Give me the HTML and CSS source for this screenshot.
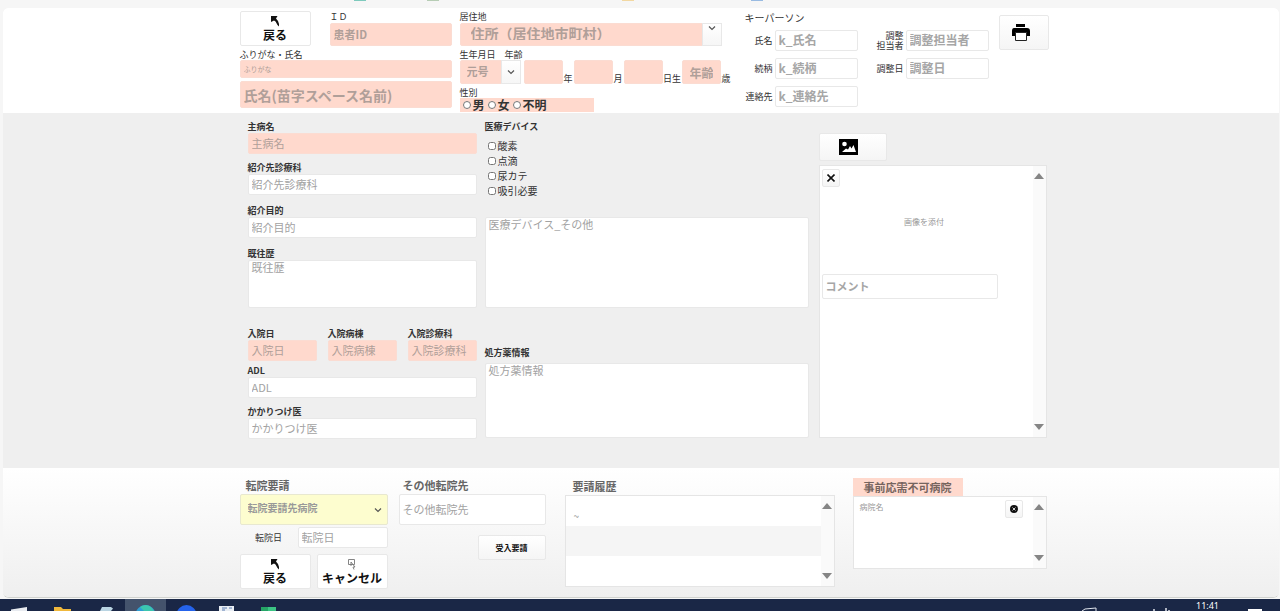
FILE: index.html
```html
<!DOCTYPE html>
<html lang="ja">
<head>
<meta charset="utf-8">
<title>転院調整</title>
<link rel="stylesheet" href="styles.css">
</head>
<body>
<svg class="symbols" aria-hidden="true">
  <symbol id="chevron" viewBox="0 0 8 8"><path d="M1 2.5 4 5.5 7 2.5" fill="none" stroke="#555" stroke-width="1.2"/></symbol>
  <symbol id="back" viewBox="0 0 8 11"><path d="M0 0h6.500L5 2.500 7 5l1 3v2.500L6.500 9 4.500 5.500 3 4.500 0 6z" fill="#111"/></symbol>
  <symbol id="up" viewBox="0 0 10 6"><path d="M0 6 5 0 10 6z" fill="#858585"/></symbol>
  <symbol id="down" viewBox="0 0 10 6"><path d="M0 0 5 6 10 0z" fill="#858585"/></symbol>
</svg>

<div class="tabstrip" aria-hidden="true"><i class="tab tab-teal"></i><i class="tab tab-mix"></i><i class="tab tab-amber"></i><i class="tab tab-blue"></i></div>

<div class="window">
  <header class="head band">
    <div class="inner head-grid">
      <section>
        <div class="id-row">
          <button class="btn big flat"><svg class="ic-back"><use href="#back"/></svg>戻る</button>
          <div class="id-field">
            <label class="lbl" for="pid">ＩＤ</label>
            <input class="in pink strong h23" id="pid" placeholder="患者ID">
          </div>
        </div>
        <label class="lbl name-lbl" for="name">ふりがな・氏名</label>
        <input class="in pink kana" aria-label="ふりがな" placeholder="ふりがな">
        <input class="in pink strong fullname" id="name" placeholder="氏名(苗字スペース名前)">
      </section>

      <section>
        <label class="lbl" for="addr">居住地</label>
        <div class="pick addr">
          <select class="pink" id="addr"><option>住所（居住地市町村）</option></select>
          <span class="drop"><svg><use href="#chevron"/></svg></span>
        </div>
        <div class="lbl birth-lbl"><label for="era">生年月日</label><label for="age">年齢</label></div>
        <div class="birth">
          <div class="pick era">
            <select class="pink" id="era"><option>元号</option></select>
            <span class="drop"><svg><use href="#chevron"/></svg></span>
          </div>
          <input class="in pink num" id="by"><label class="unit" for="by">年</label>
          <input class="in pink num" id="bm"><label class="unit" for="bm">月</label>
          <input class="in pink num" id="bd"><label class="unit wide" for="bd">日生</label>
          <input class="in pink num strong" id="age" placeholder="年齢"><label class="unit" for="age">歳</label>
        </div>
        <div class="lbl sex-lbl">性別</div>
        <div class="sex" role="radiogroup" aria-label="性別">
          <label><input type="radio" name="sex">男</label>
          <label><input type="radio" name="sex">女</label>
          <label><input type="radio" name="sex">不明</label>
        </div>
      </section>

      <section>
        <h2 class="key-title">キーパーソン</h2>
        <div class="pairs">
          <label for="kn">氏名</label><input class="in strong" id="kn" placeholder="k_氏名">
          <label for="kr">続柄</label><input class="in strong" id="kr" placeholder="k_続柄">
          <label for="kt">連絡先</label><input class="in strong" id="kt" placeholder="k_連絡先">
        </div>
      </section>

      <section class="coord">
        <div class="pairs">
          <label for="cn">調整<br>担当者</label><input class="in strong" id="cn" placeholder="調整担当者">
          <label for="cd">調整日</label><input class="in strong" id="cd" placeholder="調整日">
        </div>
      </section>

      <button class="btn print" aria-label="印刷">
        <svg viewBox="0 0 20 19"><path d="M5 1h9v3H5zM3 5h13q3 0 3 3v5h-4V9H5v4H1V8q0-3 2-3z" fill="#000"/><path d="M4.500 9.500h11v8h-11z" fill="#fff" stroke="#222"/></svg>
      </button>
    </div>
  </header>

  <main class="main band">
    <div class="inner main-grid">
      <section>
        <div class="field"><label for="f1">主病名</label><input class="in pink" id="f1" placeholder="主病名"></div>
        <div class="field g8"><label for="f2">紹介先診療科</label><input class="in" id="f2" placeholder="紹介先診療科"></div>
        <div class="field g10"><label for="f3">紹介目的</label><input class="in" id="f3" placeholder="紹介目的"></div>
        <div class="field g10"><label for="f4">既往歴</label><textarea class="in area-s" id="f4" placeholder="既往歴"></textarea></div>
        <div class="trio">
          <div class="field"><label for="f5">入院日</label><input class="in pink" id="f5" placeholder="入院日"></div>
          <div class="field"><label for="f6">入院病棟</label><input class="in pink" id="f6" placeholder="入院病棟"></div>
          <div class="field"><label for="f7">入院診療科</label><input class="in pink" id="f7" placeholder="入院診療科"></div>
        </div>
        <div class="field g4"><label for="f8">ADL</label><input class="in" id="f8" placeholder="ADL"></div>
        <div class="field g8"><label for="f9">かかりつけ医</label><input class="in" id="f9" placeholder="かかりつけ医"></div>
      </section>

      <section class="mid">
        <div class="field"><label for="dev">医療デバイス</label></div>
        <div class="checks">
          <label><input type="checkbox">酸素</label>
          <label><input type="checkbox">点滴</label>
          <label><input type="checkbox">尿カテ</label>
          <label><input type="checkbox">吸引必要</label>
        </div>
        <textarea class="in area-l" id="dev" placeholder="医療デバイス_その他"></textarea>
        <div class="field drug"><label for="drug">処方薬情報</label><textarea class="in area-m" id="drug" placeholder="処方薬情報"></textarea></div>
      </section>

      <section class="right">
        <button class="btn photo" aria-label="画像">
          <svg viewBox="0 0 19 16"><path d="M0 0h19v16H0z" fill="#000"/><circle cx="5.500" cy="5" r="2.300" fill="#fff"/><path d="M3 13 7 9.500 9 10.500 11 7l1.500 2.500L14.500 6 17 13z" fill="#fff"/></svg>
        </button>
        <div class="panel">
          <div class="attach">
            <button class="btn mini" aria-label="削除"><svg viewBox="0 0 8 8"><path d="M.5.5 7.500 7.500M7.500.5.5 7.500" stroke="#111" stroke-width="1.600"/></svg></button>
            <p class="attach-text">画像を添付</p>
            <input class="in strong comment" aria-label="コメント" placeholder="コメント">
          </div>
          <div class="bar"><svg><use href="#up"/></svg><svg><use href="#down"/></svg></div>
        </div>
      </section>
    </div>
  </main>

  <footer class="foot band">
    <div class="inner foot-grid">
      <section>
        <label class="ttl" for="req">転院要請</label>
        <div class="pick req">
          <select id="req"><option>転院要請先病院</option></select>
          <span class="drop"><svg><use href="#chevron"/></svg></span>
        </div>
        <div class="date-row"><label for="td">転院日</label><input class="in" id="td" placeholder="転院日"></div>
        <div class="actions">
          <button class="btn big flat"><svg class="ic-back"><use href="#back"/></svg>戻る</button>
          <button class="btn big flat"><svg class="ic-back" viewBox="0 0 8 11"><path d="M.5.5h6v5h-6zM3 3l4 5-2 0 1 2.500M3 3v4" fill="none" stroke="#777" stroke-width=".9"/></svg>キャンセル</button>
        </div>
      </section>

      <section class="other">
        <label class="ttl" for="oth">その他転院先</label>
        <input class="in h31" id="oth" placeholder="その他転院先">
        <button class="btn accept">受入要請</button>
      </section>

      <section class="hist">
        <h2 class="ttl">要請履歴</h2>
        <div class="panel">
          <div class="rows"><p>~</p><p></p><p></p></div>
          <div class="bar"><svg><use href="#up"/></svg><svg><use href="#down"/></svg></div>
        </div>
      </section>

      <section>
        <h2 class="ng-title">事前応需不可病院</h2>
        <div class="panel ng">
          <div class="ng-row"><span>病院名</span>
            <button class="btn mini" aria-label="削除"><svg viewBox="0 0 8 8"><circle cx="4" cy="4" r="4" fill="#111"/><path d="M2.500 2.500 5.500 5.500M5.500 2.500 2.500 5.500" stroke="#fff" stroke-width=".8"/></svg></button>
          </div>
          <div class="bar"><svg><use href="#up"/></svg><svg><use href="#down"/></svg></div>
        </div>
      </section>
    </div>
  </footer>
</div>

<div class="taskbar">
  <div class="apps">
    <span><svg viewBox="0 0 41 12"><path d="M9 12v-1.500L25 8v4z" fill="#e8ebf0"/></svg></span>
    <span><svg viewBox="0 0 41 12"><path d="M11 12V8h7l2 2h8v2z" fill="#f0b83c"/></svg></span>
    <span><svg viewBox="0 0 41 12"><path d="M16 12 18 8h9l2 1.500-2 2.500z" fill="#b9d4e2"/></svg></span>
    <span class="active"><svg viewBox="0 0 41 12"><circle cx="20.500" cy="16" r="10" fill="#2f9fd4"/><path d="M15 8q6-4 11 0l3 4H19z" fill="#3cc6ae"/></svg></span>
    <span><svg viewBox="0 0 41 12"><circle cx="20.500" cy="16" r="10" fill="#2563eb"/></svg></span>
    <span><svg viewBox="0 0 41 12"><path d="M12 7h15v5H12z" fill="#e9eef4"/><path d="M15 9h5M15 11h3M22 9h3" stroke="#5a7bb0"/></svg></span>
    <span><svg viewBox="0 0 41 12"><path d="M13 8h15v4H13z" fill="#25a566"/><path d="M20 8h8v4h-8z" fill="#3cc484"/></svg></span>
  </div>
  <div class="tray">
    <svg class="tray-ic" viewBox="0 0 90 12"><path d="M1 12 4 10l11-1v3" fill="none" stroke="#dfe4ec"/><path d="M73 12v-2M85 12V9M88 12v-1" stroke="#dfe4ec" stroke-width="1.500"/></svg>
    <time>11:41</time>
    <svg class="note" viewBox="0 0 14 12"><path d="M0 10h14v2H0z" fill="#fff"/></svg>
  </div>
</div>
</body>
</html>
```
FILE: styles.css
```css
* { box-sizing: border-box; }
body {
  margin: 0;
  min-height: 100vh;
  display: flex;
  flex-direction: column;
  background: #f6f6f6;
  color: #333;
  font: 12px/14px "Noto Sans CJK JP", sans-serif;
}
h2, p { margin: 0; }
h2 { font: inherit; }
input, select, textarea, button { font: inherit; margin: 0; }
svg { display: block; }
.symbols { display: none; }

.tabstrip { height: 8px; display: flex; padding-left: 354px; }
.tab { height: 1px; width: 12px; opacity: .6; }
.tab-teal { background: #2fae98; margin-right: 61px; }
.tab-mix { background: #8db38a; margin-right: 183px; }
.tab-amber { background: #f0c56a; margin-right: 117px; }
.tab-blue { background: #5b94d6; }

.window { margin: 0 1px 0 3px; border-radius: 6px; overflow: hidden; border-bottom: 1px solid #d0d2ce; background: #fff; }
.band { padding-left: 6px; }
.inner { width: 809px; margin: 0 auto; display: grid; }

/* shared controls */
.in {
  display: block;
  width: 100%;
  min-width: 0;
  height: 21px;
  padding: 0 3px 2px;
  border: 1px solid #e8e8e8;
  border-radius: 2px;
  background: #fff;
  color: #444;
  font-size: 11px;
  resize: none;
  outline: 0;
}
.in::placeholder { color: #a2a2a2; opacity: 1; }
.strong { font-weight: 700; }
.strong::placeholder { color: #a6a6a6; }
.pink { background: #ffd9cd; border-color: #fbdcd2; }
.pink::placeholder { color: #b09f99; }
textarea.in { line-height: 12px; }
.h23 { height: 23px; }
.h31 { height: 31px; }
.btn {
  display: flex;
  align-items: center;
  justify-content: center;
  padding: 0;
  border: 1px solid #e8e8e8;
  border-radius: 2px;
  background: linear-gradient(#fff, #f5f5f5);
  color: #111;
}
.flat { background: #fff; }
.big { flex-direction: column; width: 71px; height: 35px; font-weight: 700; font-size: 12px; line-height: 12px; gap: 2px; }
.ic-back { width: 8px; height: 11px; }
.mini { width: 18px; height: 18px; }
.mini svg { width: 8px; height: 8px; }
.lbl { display: block; font-size: 9px; line-height: 12px; color: #333; }
.pick { position: relative; }
.pick select {
  display: block;
  width: 100%;
  height: 100%;
  padding-bottom: 3px;
  border: 1px solid #fbdcd2;
  border-radius: 2px;
  appearance: none;
  color: #b09f99;
  font-weight: 700;
  outline: 0;
}
.drop {
  position: absolute;
  inset: 0 0 0 auto;
  width: 20px;
  display: flex;
  align-items: center;
  justify-content: center;
  border: 1px solid #e8e8e8;
  background: linear-gradient(#fff, #f6f6f6);
  pointer-events: none;
}
.drop svg { width: 8px; height: 8px; }

/* header */
.head { background: #fff; padding-top: 3px; padding-bottom: 1px; }
.head-grid { grid-template-columns: 212px 277px 123px 115px 50px; column-gap: 8px; }
.id-row { display: flex; justify-content: space-between; }
.id-field { width: 122px; }
.name-lbl { margin-top: 3px; margin-bottom: -1px; }
.kana { height: 18px; padding-bottom: 0; font-size: 7px; margin-bottom: 3px; }
.fullname { height: 27px; padding-bottom: 0; font-size: 14px; }
.addr { width: 262px; height: 23px; }
.addr select { padding-left: 10px; font-size: 14px; }
.addr .drop { align-items: flex-start; }
.birth-lbl { display: flex; gap: 9px; margin-top: 3px; margin-bottom: -1px; }
.birth { display: flex; height: 24px; }
.era { width: 61px; margin-right: 3px; }
.era select { padding-left: 6px; font-size: 11px; }
.num { flex: none; width: 39px; height: 24px; padding: 0 7px; font-size: 12px; }
.unit { width: 11px; font-size: 9px; line-height: 10px; align-self: flex-end; text-align: center; white-space: nowrap; }
.unit.wide { width: 19px; }
.sex-lbl { margin-top: 3px; line-height: 11px; }
.sex { display: flex; gap: 3px; width: 134px; height: 14px; padding-left: 3px; background: #ffd9cd; }
.sex label { display: flex; align-items: center; gap: 2px; font-size: 12px; line-height: 12px; font-weight: 700; }
.sex input { width: 8px; height: 8px; }
.key-title { font-size: 10px; height: 19px; }
.pairs { display: grid; grid-template-columns: 28px 83px; gap: 7px 2px; align-items: center; }
.pairs label { font-size: 9px; line-height: 10px; text-align: right; white-space: nowrap; }
.pairs .in { font-size: 12px; }
.coord { padding-top: 19px; }
.print { width: 50px; height: 35px; margin-top: 4px; padding-right: 6px; }
.print svg { width: 20px; height: 19px; }

/* main */
.main { background: #efefef; padding-top: 8px; padding-bottom: 29px; }
.main-grid { grid-template-columns: 229px 326px 228px; column-gap: 8px; padding-left: 8px; }
.field label { display: block; font-size: 9px; line-height: 12px; font-weight: 700; color: #333; }
.g4 { margin-top: 4px; }
.g8 { margin-top: 8px; }
.g10 { margin-top: 10px; }
.trio { display: grid; grid-template-columns: repeat(3, 1fr); gap: 11px; margin-top: 20px; }
.area-s { height: 48px; }
.area-m { height: 75px; }
.area-l { height: 91px; margin-top: 19px; }
.mid { padding-right: 2px; }
.checks { margin-top: 5px; padding-left: 3px; }
.checks label { display: flex; align-items: center; gap: 2px; height: 15px; font-size: 10px; }
.checks input { width: 8px; height: 8px; }
.drug { margin-top: 39px; }
.drug label { margin-bottom: 4px; }
.right { padding-top: 12px; }
.photo { width: 68px; height: 28px; padding-right: 8px; }
.photo svg { width: 19px; height: 16px; }
.panel { display: flex; border: 1px solid #e5e5e5; background: #fff; }
.right .panel { height: 273px; margin-top: 4px; }
.attach { flex: 1; padding: 3px 2px; }
.attach-text { margin: 28px 0 45px; padding-right: 4px; text-align: center; font-size: 8px; color: #999; }
.comment { width: 176px; height: 25px; }
.bar { width: 13px; display: flex; flex-direction: column; justify-content: space-between; align-items: center; padding: 7px 0; background: #fafafa; }
.bar svg { width: 10px; height: 6px; }

/* footer */
.foot { background: linear-gradient(#fff, #efefef); padding-top: 10px; padding-bottom: 8px; }
.foot-grid { grid-template-columns: 148px 155px 277px 194px; column-gap: 11px; }
.ttl { display: block; height: 16px; padding-left: 6px; font-size: 11px; font-weight: 700; color: #666; }
.req { height: 31px; }
.req select { background: #fdfdcf; border-color: #e8e8d0; padding-left: 7px; font-size: 10px; color: #999; }
.req .drop { border: 0; background: none; }
.date-row { display: grid; grid-template-columns: 58px 1fr; align-items: center; margin-top: 2px; }
.date-row label { font-size: 9px; text-align: center; }
.actions { display: flex; justify-content: space-between; margin-top: 6px; }
.other { padding-right: 8px; }
.other .ttl { padding-left: 4px; }
.accept { width: 68px; height: 25px; margin: 10px 0 0 auto; font-size: 8px; font-weight: 700; }
.hist { padding-right: 7px; }
.hist .ttl { height: 17px; padding-left: 8px; line-height: 17px; }
.hist .panel { height: 92px; }
.rows { flex: 1; }
.rows p { height: 30px; padding: 13px 8px 0; font-size: 10px; color: #999; }
.rows p:nth-child(2) { background: #f5f5f5; }
.ng-title { width: 110px; height: 18px; line-height: 18px; background: #ffd9cd; text-align: center; font-size: 11px; font-weight: 700; color: #75645e; }
.ng { height: 73px; }
.ng-row { flex: 1; display: flex; justify-content: space-between; padding: 3px 10px 0 6px; font-size: 8px; color: #999; }

/* desktop task bar */
.taskbar { flex: 1; min-height: 12px; max-height: 40px; margin-top: 1px; display: flex; justify-content: space-between; background: #1a2746; overflow: hidden; }
.apps { display: flex; padding-left: 2px; }
.apps span { width: 41px; height: 12px; }
.apps svg { width: 41px; height: 12px; }
.apps .active { background: #44536c; }
.tray { display: flex; padding-right: 18px; color: #fff; }
.tray-ic { width: 90px; height: 12px; margin-right: 25px; }
.tray time { width: 52px; padding-top: 2px; font: 9px/10px "Noto Sans", sans-serif; }
.note { width: 14px; height: 12px; }
```
